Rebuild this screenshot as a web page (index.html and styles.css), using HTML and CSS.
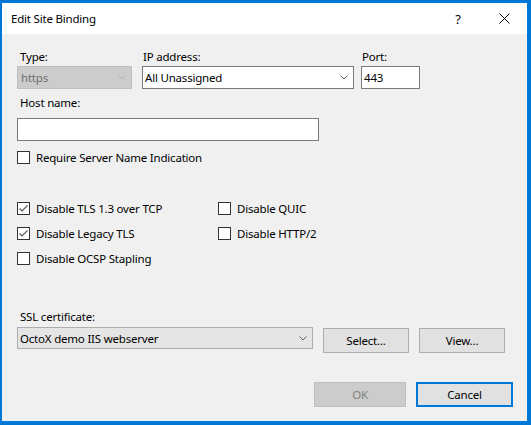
FILE: index.html
```html
<!DOCTYPE html>
<html lang="en">
<head>
    <meta charset="UTF-8">
    <title>Edit Site Binding</title>
    <link rel="stylesheet" href="styles.css">
</head>
<body>
    <div class="window">
        <div class="titlebar">
            <span class="title">Edit Site Binding</span>
            <span class="caption-btn help">?</span>
            <span class="caption-btn close">
                <svg width="11" height="11" viewBox="0 0 11 11"><path d="M0.5 0.5L10.5 10.5M10.5 0.5L0.5 10.5" stroke="#000" stroke-width="1" fill="none"/></svg>
            </span>
        </div>

        <div class="content">
            <div class="binding-row">
                <div class="field type-field">
                    <div class="label">Type:</div>
                    <div class="combo disabled">
                        <span class="combo-text">https</span>
                        <svg class="chevron" width="8" height="5" viewBox="0 0 8 5"><path d="M0.5 0.5L4 4L7.5 0.5" stroke="#b4b4b4" fill="none"/></svg>
                    </div>
                </div>
                <div class="field ip-field">
                    <div class="label">IP address:</div>
                    <div class="combo">
                        <span class="combo-text">All Unassigned</span>
                        <svg class="chevron" width="8" height="5" viewBox="0 0 8 5"><path d="M0.5 0.5L4 4L7.5 0.5" stroke="#606060" fill="none"/></svg>
                    </div>
                </div>
                <div class="field port-field">
                    <div class="label">Port:</div>
                    <div class="textbox">443</div>
                </div>
            </div>

            <div class="field host-field">
                <div class="label">Host name:</div>
                <div class="textbox"></div>
            </div>

            <div class="check-row sni-row">
                <span class="check"></span>
                <span>Require Server Name Indication</span>
            </div>

            <div class="options">
                <div class="check-row">
                    <span class="check"><svg width="11" height="11" viewBox="0 0 11 11"><path d="M1.5 5.5L4 8L9.5 2.5" stroke="#5a5a5a" stroke-width="1.2" fill="none"/></svg></span>
                    <span>Disable TLS 1.3 over TCP</span>
                </div>
                <div class="check-row">
                    <span class="check"></span>
                    <span>Disable QUIC</span>
                </div>
                <div class="check-row">
                    <span class="check"><svg width="11" height="11" viewBox="0 0 11 11"><path d="M1.5 5.5L4 8L9.5 2.5" stroke="#5a5a5a" stroke-width="1.2" fill="none"/></svg></span>
                    <span>Disable Legacy TLS</span>
                </div>
                <div class="check-row">
                    <span class="check"></span>
                    <span>Disable HTTP/2</span>
                </div>
                <div class="check-row">
                    <span class="check"></span>
                    <span>Disable OCSP Stapling</span>
                </div>
            </div>

            <div class="field ssl-field">
                <div class="label">SSL certificate:</div>
                <div class="ssl-row">
                    <div class="combo readonly">
                        <span class="combo-text">OctoX demo IIS webserver</span>
                        <svg class="chevron" width="8" height="5" viewBox="0 0 8 5"><path d="M0.5 0.5L4 4L7.5 0.5" stroke="#606060" fill="none"/></svg>
                    </div>
                    <button class="btn">Select...</button>
                    <button class="btn">View...</button>
                </div>
            </div>
        </div>

        <div class="footer">
            <button class="btn ok-btn" disabled>OK</button>
            <button class="btn cancel-btn">Cancel</button>
        </div>
    </div>
</body>
</html>
```

FILE: styles.css
```css
body {
    margin: 0;
    background-color: #0078d7;
    font-family: "Noto Sans", "Open Sans", sans-serif;
    font-size: 11.5px;
    letter-spacing: -0.2px;
    color: #000;
}
.window {
    margin: 3px 4px 4px 2px;
    height: 418px;
    background-color: #f0f0f0;
    display: flex;
    flex-direction: column;
}
.titlebar {
    height: 31px;
    flex-shrink: 0;
    background-color: #fff;
    display: flex;
    align-items: center;
    padding-left: 9px;
}
.title {
    flex: 1;
}
.caption-btn {
    width: 46px;
    height: 31px;
    display: flex;
    align-items: center;
    justify-content: center;
}
.help {
    font-size: 13px;
}
.content {
    padding: 15px 0 0 15px;
}
.label {
    line-height: 16px;
    height: 16px;
    margin-bottom: 1px;
}
.binding-row {
    display: flex;
}
.type-field {
    width: 115px;
    margin-right: 10px;
}
.type-field .label {
    padding-left: 3px;
}
.ip-field {
    width: 212px;
    margin-right: 7px;
}
.ip-field .label,
.port-field .label {
    padding-left: 1px;
}
.port-field {
    width: 59px;
}
.combo,
.textbox {
    box-sizing: border-box;
    height: 23px;
    border: 1px solid #7a7a7a;
    background-color: #fff;
    display: flex;
    align-items: center;
    padding: 0 5px 0 2px;
}
.combo-text {
    flex: 1;
}
.combo.disabled {
    background-color: #cccccc;
    border-color: #bfbfbf;
    color: #6d6d6d;
    padding-left: 3px;
}
.combo.readonly {
    background-color: #e5e5e5;
    border-color: #adadad;
}
.host-field {
    margin-top: 6px;
    width: 302px;
}
.host-field .label {
    padding-left: 3px;
    margin-bottom: 7px;
}
.check-row {
    display: flex;
    align-items: center;
    height: 16px;
    gap: 6px;
}
.check {
    box-sizing: border-box;
    width: 13px;
    height: 13px;
    border: 1px solid #333;
    background-color: #fff;
    display: flex;
    align-items: center;
    justify-content: center;
}
.sni-row {
    margin-top: 8px;
}
.options {
    margin-top: 35px;
    display: grid;
    grid-template-columns: 201px 200px;
    row-gap: 9px;
}
.ssl-field {
    margin-top: 43px;
}
.ssl-field .label {
    padding-left: 3px;
    margin-bottom: 1px;
}
.ssl-row {
    display: flex;
    align-items: flex-start;
}
.ssl-row .combo {
    width: 296px;
    height: 22px;
    margin-top: 1px;
}
.btn {
    box-sizing: border-box;
    height: 25px;
    border: 1px solid #adadad;
    background-color: #e1e1e1;
    font-family: inherit;
    font-size: 11.5px;
    letter-spacing: -0.2px;
    color: #000;
    padding: 0;
}
.ssl-row .btn {
    width: 86px;
    margin-left: 10px;
    margin-top: 2px;
}
.footer {
    margin-top: auto;
    display: flex;
    justify-content: flex-end;
    gap: 10px;
    padding: 0 14px 14px 0;
}
.ok-btn {
    width: 92px;
}
.ok-btn:disabled {
    background-color: #cccccc;
    border-color: #bfbfbf;
    color: #838383;
}
.cancel-btn {
    width: 97px;
    border: 2px solid #0078d7;
}
```
